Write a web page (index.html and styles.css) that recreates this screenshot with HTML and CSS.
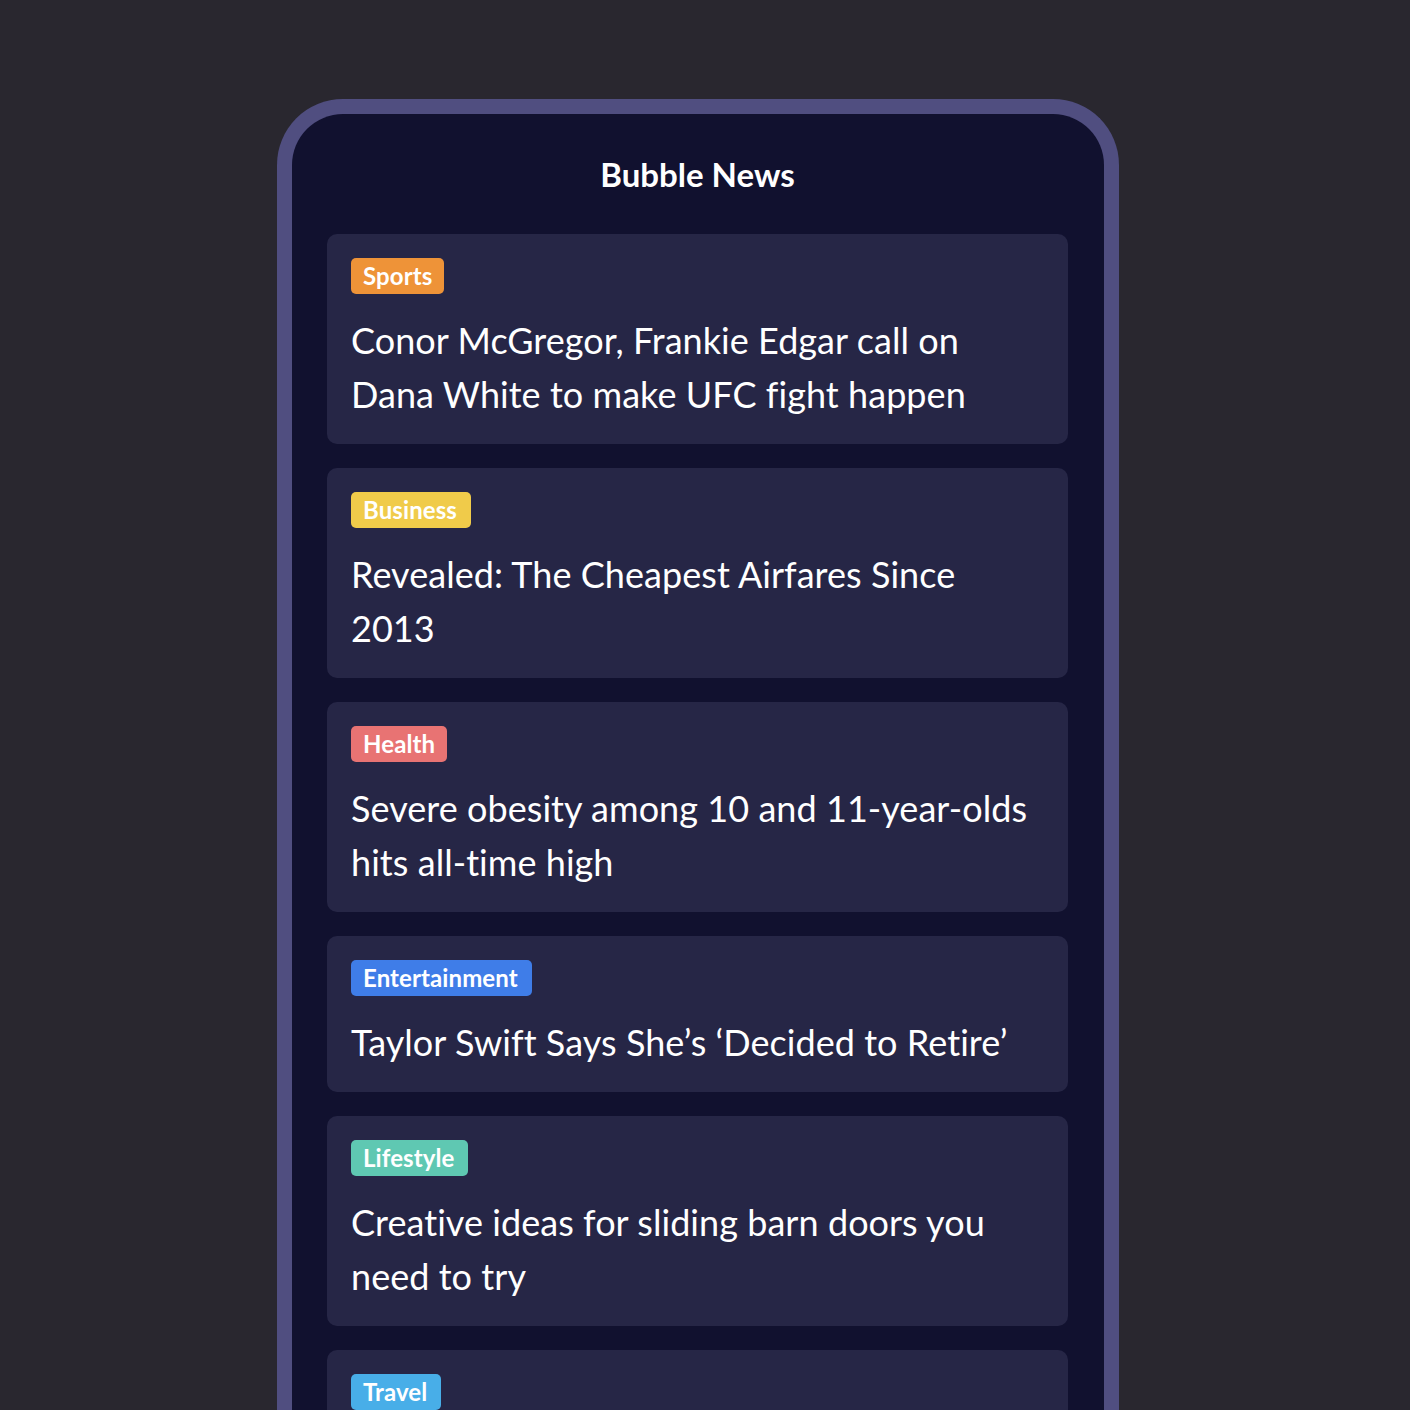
FILE: index.html
```html
<!DOCTYPE html>
<html lang="en">
<head>
<meta charset="utf-8">
<title>Bubble News</title>
<link rel="stylesheet" href="styles.css">
</head>
<body>
<div class="phone">
  <header class="header">Bubble News</header>
  <main class="feed">
    <article class="card">
      <span class="tag tag-sports">Sports</span>
      <h2 class="title">Conor McGregor, Frankie Edgar call on Dana White to make UFC fight happen</h2>
    </article>
    <article class="card">
      <span class="tag tag-business">Business</span>
      <h2 class="title">Revealed: The Cheapest Airfares Since 2013</h2>
    </article>
    <article class="card">
      <span class="tag tag-health">Health</span>
      <h2 class="title">Severe obesity among 10 and 11-year-olds hits all-time high</h2>
    </article>
    <article class="card">
      <span class="tag tag-entertainment">Entertainment</span>
      <h2 class="title">Taylor Swift Says She’s ‘Decided to Retire’</h2>
    </article>
    <article class="card">
      <span class="tag tag-lifestyle">Lifestyle</span>
      <h2 class="title">Creative ideas for sliding barn doors you need to try</h2>
    </article>
    <article class="card card-last">
      <span class="tag tag-travel">Travel</span>
    </article>
  </main>
</div>
</body>
</html>
```

FILE: styles.css
```css
html, body {
  margin: 0;
  padding: 0;
  overflow: hidden;
}
body {
  background: #29272f;
  font-family: Lato, "Noto Sans", sans-serif;
  color: #ffffff;
  padding: 99px 0 0 277px;
  height: 1410px;
  box-sizing: border-box;
}
.phone {
  width: 842px;
  box-sizing: border-box;
  border: 15px solid #504e80;
  border-bottom: none;
  border-radius: 66px 66px 0 0;
  background: #11112f;
  padding: 0 36px 40px 35px;
  min-height: 1400px;
}
.header {
  font-size: 33px;
  font-weight: 700;
  line-height: 48px;
  text-align: center;
  padding: 36px 0;
}
.feed {
  display: flex;
  flex-direction: column;
  gap: 24px;
}
.card {
  background: #262646;
  border-radius: 10px;
  padding: 24px 24px 23px;
  display: flex;
  flex-direction: column;
  align-items: flex-start;
}
.card-last {
  min-height: 120px;
}
.tag {
  display: inline-block;
  font-size: 24px;
  font-weight: 700;
  line-height: 36px;
  padding: 0 12px;
  border-radius: 5px;
  margin-bottom: 19px;
  letter-spacing: 0.1px;
}
.tag-sports { background: #ee9338; }
.tag-business { background: #f0cb4a; padding: 0 14px 0 12px; }
.tag-health { background: #e87373; }
.tag-entertainment { background: #3f7de8; padding: 0 14px 0 12px; }
.tag-lifestyle { background: #5fc8b2; padding: 0 14px 0 12px; }
.tag-travel { background: #48aee8; padding: 0 14px 0 12px; }
.title {
  margin: 0;
  font-size: 36px;
  font-weight: 400;
  line-height: 54px;
  letter-spacing: 0.05px;
}
```
